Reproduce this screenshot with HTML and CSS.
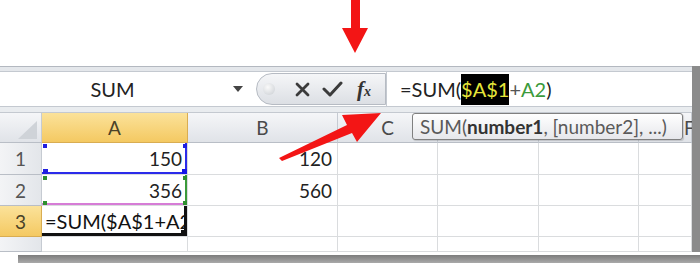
FILE: index.html
```html
<!DOCTYPE html>
<html>
<head>
    <title>SUM with absolute reference</title>
    <link rel="stylesheet" href="styles.css">
</head>
<body>
<div class="page">
    <div class="blank"></div>

    <div class="frame">
        <div class="ribbon-edge"></div>

        <div class="formula-bar">
            <div class="namebox">
                <span class="name">SUM</span>
                <span class="caret"></span>
            </div>
            <div class="fx-panel">
                <span class="dot"></span>
                <svg class="cancel" width="15" height="15" viewBox="0 0 15 15">
                    <path d="M2 2 L13 13 M13 2 L2 13" stroke="#3b3b3b" stroke-width="2.8" stroke-linecap="round"/>
                </svg>
                <svg class="enter" width="21" height="17" viewBox="0 0 21 17">
                    <path d="M2 8 L8 14 L19 2" stroke="#3b3b3b" stroke-width="3" fill="none" stroke-linecap="round" stroke-linejoin="round"/>
                </svg>
                <span class="fx">f<span class="sub">x</span></span>
            </div>
            <div class="formula">=SUM(<span class="ref-abs">$A$1</span><span class="plus">+</span><span class="ref-rel">A2</span>)</div>
        </div>

        <div class="split"></div>

        <div class="grid">
            <!-- header row -->
            <div class="hd corner"><span class="tri"></span></div>
            <div class="hd on">A</div>
            <div class="hd">B</div>
            <div class="hd">C</div>
            <div class="hd"></div>
            <div class="hd"></div>
            <div class="hd col-f">F</div>

            <!-- row 1 -->
            <div class="hd rh">1</div>
            <div class="c sel-blue">150
                <span class="h h-tl"></span><span class="h h-tr"></span>
                <span class="h h-bl"></span><span class="h h-br"></span>
            </div>
            <div class="c">120</div>
            <div class="c"></div><div class="c"></div><div class="c"></div><div class="c"></div>

            <!-- row 2 -->
            <div class="hd rh">2</div>
            <div class="c sel-green">356
                <span class="g g-tl"></span><span class="g g-tr"></span>
                <span class="g g-bl"></span><span class="g g-br"></span>
            </div>
            <div class="c">560</div>
            <div class="c"></div><div class="c"></div><div class="c"></div><div class="c"></div>

            <!-- row 3 -->
            <div class="hd rh on">3</div>
            <div class="c active">=SUM($A$1+A2<span class="fill"></span></div>
            <div class="c"></div>
            <div class="c"></div><div class="c"></div><div class="c"></div><div class="c"></div>

            <!-- row 4 -->
            <div class="hd rh last"><span>4</span></div>
            <div class="c"></div><div class="c"></div>
            <div class="c"></div><div class="c"></div><div class="c"></div><div class="c"></div>
        </div>
    </div>

    <div class="shadow"></div>

    <div class="tooltip">SUM(<b>number1</b>, [number2], ...)</div>

    <svg class="arrows" width="700" height="263" viewBox="0 0 700 263">
        <polygon points="351,0 360,0 360,28 368,28 355,53 342,28 351,28" fill="#f31515"/>
        <polygon points="279,158 347,125 342,115 381,113 357,142 352,133 282,161" fill="#f31515"/>
    </svg>
</div>
</body>
</html>
```

FILE: styles.css
```css
body { margin: 0; width: 700px; height: 263px; overflow: hidden; background: #fff; font-family: Lato, "Noto Sans", sans-serif; }
.page { position: relative; height: 263px; }
.blank { height: 66px; }
.frame { width: 692px; border-right: 8px solid #8b8b8b; }

.ribbon-edge { height: 6px; box-sizing: border-box; background: #e4e7eb; border-top: 1px solid #b3b8c0; border-bottom: 1px solid #c4c9d0; }

.formula-bar { display: flex; align-items: center; height: 35px; box-sizing: border-box; border-bottom: 1px solid #c4c9d0; }
.namebox { width: 256px; display: flex; align-items: center; font-size: 20px; color: #222; }
.name { width: 225px; text-align: center; }
.caret { margin-left: 8px; border-left: 5px solid transparent; border-right: 5px solid transparent; border-top: 6px solid #444; }

.fx-panel { width: 130px; height: 32px; box-sizing: border-box; display: flex; align-items: center; background: linear-gradient(#f5f6f8, #dcdfe4); border: 1px solid #b6bbc3; border-radius: 16px 0 0 16px; }
.dot { width: 12px; height: 12px; margin-left: 6px; border-radius: 50%; background: radial-gradient(circle at 40% 35%, #fafafa, #c9cdd2); }
.cancel { margin-left: 20px; }
.enter { margin-left: 12px; }
.fx { margin-left: 14px; font-family: "Liberation Serif", serif; font-style: italic; font-weight: bold; font-size: 21px; color: #333; }
.fx .sub { font-size: 14px; }

.formula { flex: 1; height: 34px; box-sizing: border-box; padding-left: 13px; display: flex; align-items: center; font-size: 20px; color: #222; border-left: 1px solid #c4c9d0; white-space: pre; }
.ref-abs { background: #000; color: #e6e63a; line-height: 31px; }
.plus { color: #555; }
.ref-rel { color: #3b9a3b; }

.split { height: 6px; box-sizing: border-box; background: #e9ecef; border-bottom: 1px solid #c4c9d0; }

.grid { display: grid; grid-template-columns: 42px 146px 150px 100px 101px 100px 53px; grid-template-rows: 30px 32px 31px 31px 15px; overflow: hidden; }
.hd { box-sizing: border-box; display: flex; align-items: center; justify-content: center; background: linear-gradient(#f5f6f8, #e0e3e8); border-right: 1px solid #c6cbd2; border-bottom: 1px solid #b9bec6; color: #4a4a4a; font-size: 19px; }
.hd.on { background: linear-gradient(#fbe29a, #f4c962); color: #4a4228; border-color: #d9ad52; }
.hd.col-f { justify-content: flex-start; padding-left: 45px; }
.rh { background: linear-gradient(90deg, #f3f4f6, #e3e6ea); color: #555; }
.rh.last { align-items: flex-start; overflow: hidden; }
.rh.last span { margin-top: 9px; }
.corner { justify-content: flex-end; align-items: flex-end; padding: 0 4px 3px 0; }
.tri { width: 0; height: 0; border-left: 19px solid transparent; border-bottom: 18px solid #cfd3d8; }

.c { position: relative; box-sizing: border-box; display: flex; align-items: center; justify-content: flex-end; padding-right: 5px; border-right: 1px solid #dadcde; border-bottom: 1px solid #dadcde; font-size: 19px; color: #222; }
.sel-blue { box-shadow: inset -2px -2px 0 #2b2bea; }
.sel-green { box-shadow: inset -2px 0 0 #3a9a3a, inset 0 -2px 0 #d67cd6; }
.h, .g { position: absolute; width: 4px; height: 4px; }
.h { background: #1f1fe0; }
.g { background: #2f8f2f; }
.h-tl { left: 1px; top: 1px; }
.h-tr { right: 0; top: 1px; }
.h-bl { left: 1px; bottom: 0; width: 5px; height: 5px; }
.h-br { right: 0; bottom: 0; width: 5px; height: 5px; background: #1414e8; }
.g-tl { left: 1px; top: 1px; }
.g-tr { right: 0; top: 1px; }
.g-bl { left: 1px; bottom: 0; }
.g-br { right: 0; bottom: 0; }
.active { justify-content: flex-start; padding: 0 0 0 3px; font-size: 20px; color: #111; overflow: hidden; white-space: nowrap; box-shadow: inset -3px -3px 0 #111; }
.fill { position: absolute; right: 0; bottom: 0; width: 6px; height: 6px; background: #111; }

.shadow { margin: 3px 0 0 18px; height: 8px; background: linear-gradient(#7c7c7c, #a9a9a9); }

.tooltip { position: absolute; left: 412px; top: 113px; width: 271px; height: 27px; box-sizing: border-box; padding-left: 7px; line-height: 25px; font-size: 19px; color: #5a5a5a; white-space: nowrap; background: linear-gradient(#ffffff, #e6e7eb); border: 1px solid #808080; border-radius: 3px; box-shadow: 1px 1px 1px rgba(0,0,0,0.15); }
.tooltip b { color: #333; }

.arrows { position: absolute; left: 0; top: 0; pointer-events: none; }
```
